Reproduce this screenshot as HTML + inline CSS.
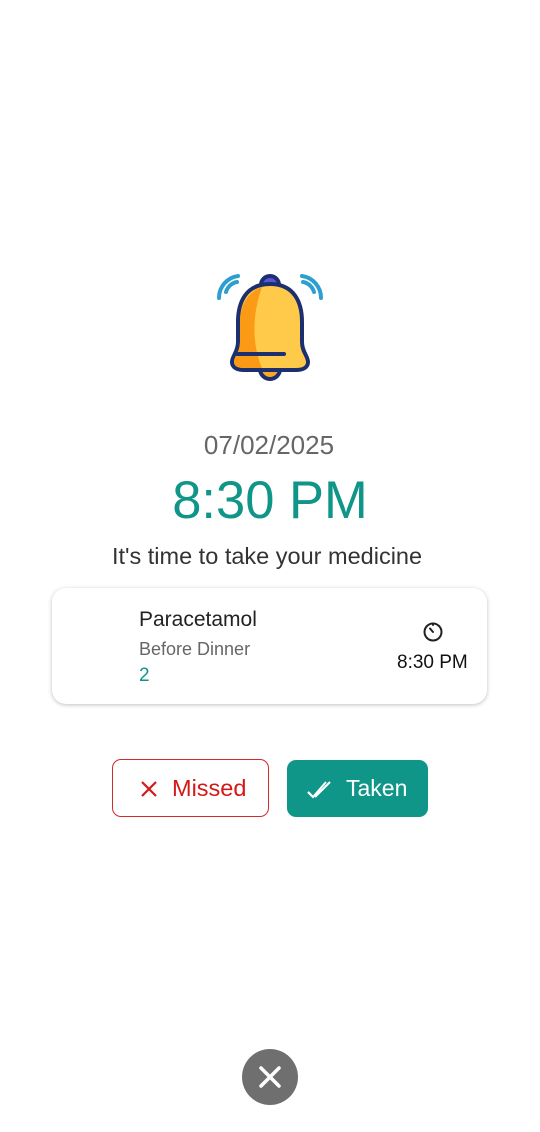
<!DOCTYPE html>
<html><head><meta charset="utf-8"><style>
body{margin:0;width:540px;height:1132px;background:#fff;font-family:"Liberation Sans",sans-serif;position:relative;overflow:hidden}
.a{position:absolute}
</style></head><body>
<svg class="a" style="left:210px;top:262px" width="120" height="126" viewBox="210 262 120 126">
<path d="M226 292 A14 14 0 0 1 237 282" stroke="#2b9fd0" stroke-width="4" fill="none" stroke-linecap="round"/>
<path d="M219 298 A22 22 0 0 1 238 276" stroke="#2b9fd0" stroke-width="4" fill="none" stroke-linecap="round"/>
<path d="M314 292 A14 14 0 0 0 303 282" stroke="#2b9fd0" stroke-width="4" fill="none" stroke-linecap="round"/>
<path d="M321 298 A22 22 0 0 0 302 276" stroke="#2b9fd0" stroke-width="4" fill="none" stroke-linecap="round"/>
<path d="M261 285 A9 9 0 0 1 279 285 Z" fill="#5a55d6" stroke="#1c2f6e" stroke-width="4"/>
<path d="M260 369 A10 10 0 0 0 280 369 Z" fill="#f9a825" stroke="#1c2f6e" stroke-width="4"/>
<path d="M270 284 C246 284 238 302 238 322 L238 342 C238 352 232 356 232 362 C232 368 238 370 244 370 L296 370 C302 370 308 368 308 362 C308 356 302 352 302 342 L302 322 C302 302 294 284 270 284 Z" fill="#ffc94a" stroke="#1c2f6e" stroke-width="4"/>
<path d="M262 287 C248 292 240 305 240 322 L240 342 C240 352 234 356 234 362 C234 366 238 368 244 368 L262 368 C254 350 250 320 262 287Z" fill="#fb9a14"/>
<path d="M237 354 L284 354" stroke="#1c2f6e" stroke-width="4" stroke-linecap="round"/>
</svg>
<div class="a" style="left:0;width:538px;top:430px;text-align:center;font-size:26px;color:#666">07/02/2025</div>
<div class="a" style="left:0;width:540px;top:470px;text-align:center;font-size:52.5px;color:#0f9688">8:30 PM</div>
<div class="a" style="left:0;width:534px;top:543px;text-align:center;font-size:23.5px;color:#333">It's time to take your medicine</div>
<div class="a" style="left:52px;top:588px;width:435px;height:116px;border-radius:14px;background:#fff;box-shadow:0 1px 4px rgba(0,0,0,.25)"></div>
<div class="a" style="left:139px;top:608px;font-size:21px;color:#222">Paracetamol</div>
<div class="a" style="left:139px;top:639px;font-size:18px;color:#666">Before Dinner</div>
<div class="a" style="left:139px;top:665px;font-size:19px;color:#0f9688">2</div>
<svg class="a" style="left:422px;top:620px" width="22" height="22" viewBox="0 0 22 22"><circle cx="11" cy="12" r="8.5" fill="none" stroke="#222" stroke-width="2"/><path d="M11 3.5 L11 5 M11 12 L8 8.5" stroke="#222" stroke-width="2" stroke-linecap="round"/></svg>
<div class="a" style="left:397px;top:652px;font-size:19px;color:#111">8:30 PM</div>
<div class="a" style="left:112px;top:759px;width:155px;height:56px;border:1.5px solid #d42a2a;border-radius:9px"></div>
<svg class="a" style="left:140px;top:780px" width="18" height="18"><path d="M2 2L16 16M16 2L2 16" stroke="#d41818" stroke-width="2.2"/></svg>
<div class="a" style="left:172px;top:775px;font-size:23.5px;color:#d41818">Missed</div>
<div class="a" style="left:287px;top:760px;width:141px;height:57px;background:#0f9688;border-radius:9px"></div>
<svg class="a" style="left:306px;top:778px" width="32" height="22"><path d="M2 14L7 19L20 4M9 19L24 4" stroke="#fff" stroke-width="2" fill="none"/><path d="M2 14L6 18" stroke="#fff" stroke-width="2"/></svg>
<div class="a" style="left:346px;top:775px;font-size:23px;color:#fff">Taken</div>
<div class="a" style="left:242px;top:1049px;width:56px;height:56px;border-radius:50%;background:#6f6f6f"></div>
<svg class="a" style="left:258px;top:1065px" width="24" height="24"><path d="M3 3L21 21M21 3L3 21" stroke="#fff" stroke-width="3.5" stroke-linecap="round"/></svg>
</body></html>
